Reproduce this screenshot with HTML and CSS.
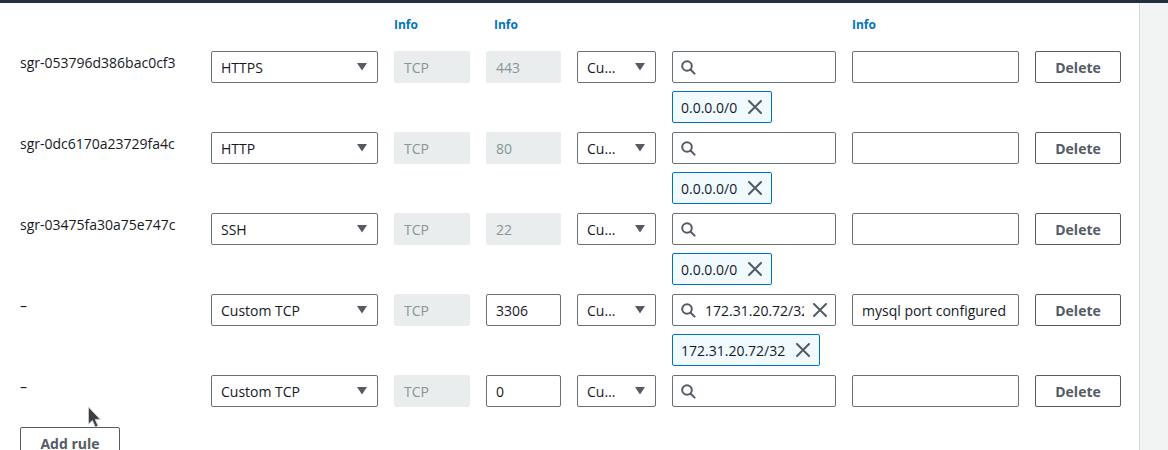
FILE: index.html
```html
<!DOCTYPE html>
<html>
<head>
<meta charset="utf-8">
<link rel="stylesheet" href="styles.css">
</head>
<body>
<div class="topbar"></div>
<div class="page">
  <main class="content">
    <div class="labels cols">
      <span class="info col-proto">Info</span>
      <span class="info col-port">Info</span>
      <span class="info col-desc">Info</span>
    </div>
    <div class="rules">
      <div class="rule cols">
        <div class="rule-id">sgr-053796d386bac0cf3</div>
        <div class="ctl select"><span>HTTPS</span><svg class="caret" width="10" height="8" viewBox="0 0 10 8"><polygon points="0,0 10,0 5,7.5"/></svg></div>
        <div class="ctl disabled">TCP</div>
        <div class="ctl disabled">443</div>
        <div class="ctl select"><span>Cu…</span><svg class="caret" width="10" height="8" viewBox="0 0 10 8"><polygon points="0,0 10,0 5,7.5"/></svg></div>
        <div class="ctl search"><svg class="icon" width="15" height="15" viewBox="0 0 15 15"><circle cx="6" cy="6" r="4.8"/><path d="M9.7 9.7 L13.6 13.6"/></svg></div>
        <div class="ctl"></div>
        <button class="btn">Delete</button>
        <div class="token"><span>0.0.0.0/0</span><svg class="icon" width="14" height="14" viewBox="0 0 14 14"><path d="M1 1 L13 13 M13 1 L1 13"/></svg></div>
      </div>
      <div class="rule cols">
        <div class="rule-id">sgr-0dc6170a23729fa4c</div>
        <div class="ctl select"><span>HTTP</span><svg class="caret" width="10" height="8" viewBox="0 0 10 8"><polygon points="0,0 10,0 5,7.5"/></svg></div>
        <div class="ctl disabled">TCP</div>
        <div class="ctl disabled">80</div>
        <div class="ctl select"><span>Cu…</span><svg class="caret" width="10" height="8" viewBox="0 0 10 8"><polygon points="0,0 10,0 5,7.5"/></svg></div>
        <div class="ctl search"><svg class="icon" width="15" height="15" viewBox="0 0 15 15"><circle cx="6" cy="6" r="4.8"/><path d="M9.7 9.7 L13.6 13.6"/></svg></div>
        <div class="ctl"></div>
        <button class="btn">Delete</button>
        <div class="token"><span>0.0.0.0/0</span><svg class="icon" width="14" height="14" viewBox="0 0 14 14"><path d="M1 1 L13 13 M13 1 L1 13"/></svg></div>
      </div>
      <div class="rule cols">
        <div class="rule-id">sgr-03475fa30a75e747c</div>
        <div class="ctl select"><span>SSH</span><svg class="caret" width="10" height="8" viewBox="0 0 10 8"><polygon points="0,0 10,0 5,7.5"/></svg></div>
        <div class="ctl disabled">TCP</div>
        <div class="ctl disabled">22</div>
        <div class="ctl select"><span>Cu…</span><svg class="caret" width="10" height="8" viewBox="0 0 10 8"><polygon points="0,0 10,0 5,7.5"/></svg></div>
        <div class="ctl search"><svg class="icon" width="15" height="15" viewBox="0 0 15 15"><circle cx="6" cy="6" r="4.8"/><path d="M9.7 9.7 L13.6 13.6"/></svg></div>
        <div class="ctl"></div>
        <button class="btn">Delete</button>
        <div class="token"><span>0.0.0.0/0</span><svg class="icon" width="14" height="14" viewBox="0 0 14 14"><path d="M1 1 L13 13 M13 1 L1 13"/></svg></div>
      </div>
      <div class="rule cols">
        <div class="rule-id">–</div>
        <div class="ctl select"><span>Custom TCP</span><svg class="caret" width="10" height="8" viewBox="0 0 10 8"><polygon points="0,0 10,0 5,7.5"/></svg></div>
        <div class="ctl disabled">TCP</div>
        <div class="ctl">3306</div>
        <div class="ctl select"><span>Cu…</span><svg class="caret" width="10" height="8" viewBox="0 0 10 8"><polygon points="0,0 10,0 5,7.5"/></svg></div>
        <div class="ctl search"><svg class="icon" width="15" height="15" viewBox="0 0 15 15"><circle cx="6" cy="6" r="4.8"/><path d="M9.7 9.7 L13.6 13.6"/></svg><span class="search-text">172.31.20.72/32</span><svg class="icon" width="14" height="14" viewBox="0 0 14 14"><path d="M1 1 L13 13 M13 1 L1 13"/></svg></div>
        <div class="ctl">mysql port configured</div>
        <button class="btn">Delete</button>
        <div class="token"><span>172.31.20.72/32</span><svg class="icon" width="14" height="14" viewBox="0 0 14 14"><path d="M1 1 L13 13 M13 1 L1 13"/></svg></div>
      </div>
      <div class="rule cols">
        <div class="rule-id">–</div>
        <div class="ctl select"><span>Custom TCP</span><svg class="caret" width="10" height="8" viewBox="0 0 10 8"><polygon points="0,0 10,0 5,7.5"/></svg></div>
        <div class="ctl disabled">TCP</div>
        <div class="ctl">0</div>
        <div class="ctl select"><span>Cu…</span><svg class="caret" width="10" height="8" viewBox="0 0 10 8"><polygon points="0,0 10,0 5,7.5"/></svg></div>
        <div class="ctl search"><svg class="icon" width="15" height="15" viewBox="0 0 15 15"><circle cx="6" cy="6" r="4.8"/><path d="M9.7 9.7 L13.6 13.6"/></svg></div>
        <div class="ctl"></div>
        <button class="btn">Delete</button>
      </div>
    </div>
    <button class="btn add">Add rule</button>
    <svg class="pointer" width="15" height="23" viewBox="0 0 15 23"><path d="M1.5 1 L1.5 18 L5.4 14.4 L8.3 21 L11 19.8 L8.2 13.4 L13.2 13.4 Z"/></svg>
  </main>
  <aside class="side"></aside>
</div>
</body>
</html>
```

FILE: styles.css
```css
html, body {
  margin: 0;
  padding: 0;
  background: #ffffff;
}

body {
  font-family: "Open Sans", "Noto Sans", sans-serif;
  font-size: 14px;
  color: #16191f;
  height: 450px;
  overflow: hidden;
}

.topbar {
  height: 3px;
  background: #232f3e;
}

.page {
  display: flex;
  height: 447px;
}

.content {
  position: relative;
  width: 1139px;
  flex: none;
  box-sizing: border-box;
  padding: 14px 0 0 20px;
}

.side {
  flex: 1;
  background: #f2f3f3;
  border-left: 1px solid #d5dbdb;
}

.cols {
  display: grid;
  grid-template-columns: 175px 167px 76px 75px 79px 164px 167px 86px;
  column-gap: 16px;
}

.labels {
  height: 16px;
  margin-bottom: 18px;
}

.info {
  font-size: 12px;
  font-weight: 700;
  line-height: 16px;
  color: #0073bb;
}

.col-proto { grid-column: 3; }
.col-port { grid-column: 4; margin-left: 8px; }
.col-desc { grid-column: 7; }

.rules {
  display: flex;
  flex-direction: column;
  gap: 9px;
}

.rule {
  grid-auto-rows: 32px;
  row-gap: 8px;
  align-items: center;
}

.rule-id {
  align-self: start;
  padding-top: 1px;
  line-height: 21px;
  white-space: nowrap;
}

.ctl {
  height: 32px;
  box-sizing: border-box;
  border: 1px solid #687078;
  border-radius: 2px;
  display: flex;
  align-items: center;
  padding: 0 10px 0 9px;
  white-space: nowrap;
  overflow: hidden;
  background: #ffffff;
}

.disabled {
  background: #eaeded;
  border-color: #eaeded;
  color: #879596;
}

.select {
  justify-content: space-between;
}

.caret {
  flex: none;
  fill: #545b64;
}

.search {
  padding: 0 8px;
  gap: 9px;
}

.icon {
  flex: none;
  fill: none;
  stroke: #545b64;
  stroke-width: 2;
  stroke-linecap: round;
}

.search-text {
  flex: 1;
  overflow: hidden;
  white-space: nowrap;
}

.btn {
  height: 32px;
  box-sizing: border-box;
  border: 1px solid #545b64;
  border-radius: 2px;
  background: #ffffff;
  color: #545b64;
  font-family: "Open Sans", "Noto Sans", sans-serif;
  font-weight: 700;
  font-size: 14px;
  padding: 0;
}

.token {
  grid-column: 6;
  grid-row: 2;
  justify-self: start;
  height: 32px;
  box-sizing: border-box;
  border: 1px solid #0073bb;
  border-radius: 2px;
  background: #f1faff;
  display: flex;
  align-items: center;
  gap: 11px;
  padding: 0 9px 0 8px;
  white-space: nowrap;
}

.add {
  display: block;
  width: 100px;
  margin-top: 20px;
}

.pointer {
  position: absolute;
  left: 87px;
  top: 403px;
  fill: #3b3f44;
  stroke: #d0d3d6;
  stroke-width: 0.8;
}
```
